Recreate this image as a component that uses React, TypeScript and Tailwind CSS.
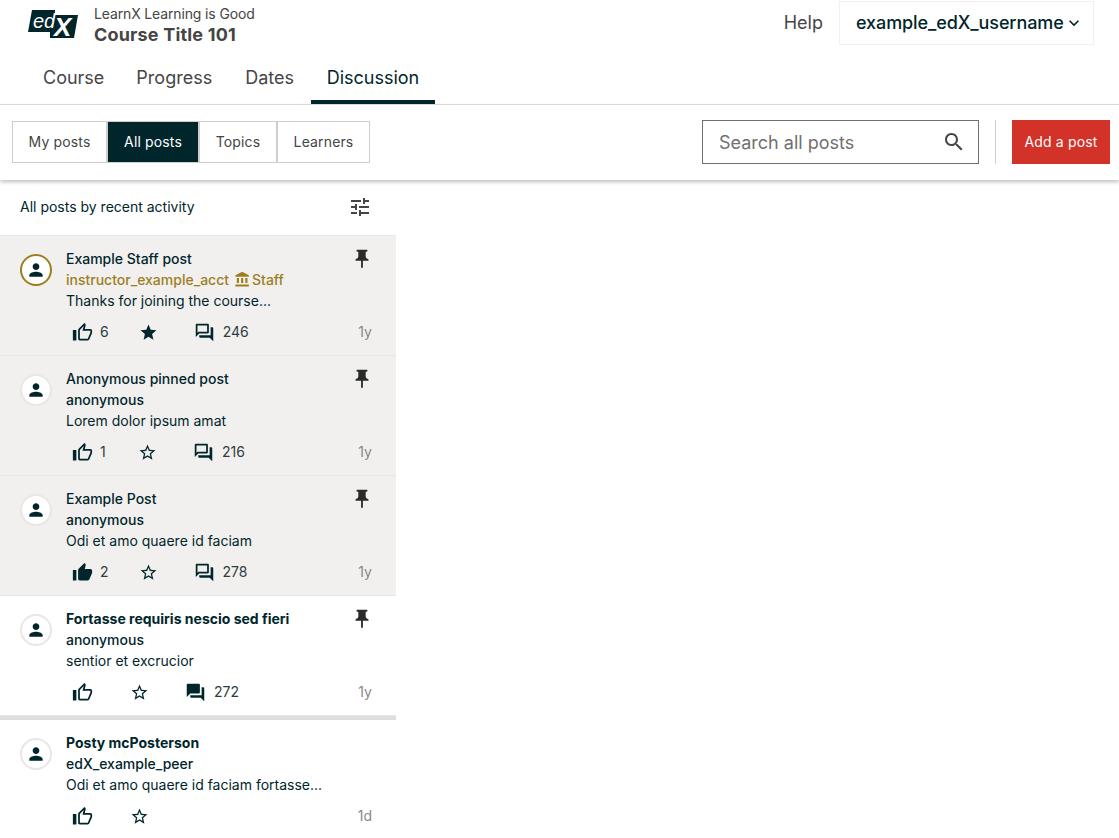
const font = "[font-family:Inter,'Noto_Sans',sans-serif]";

const paths = {
  thumb:
    "M9 21h9c.83 0 1.54-.5 1.84-1.22l3.02-7.05c.09-.23.14-.47.14-.73v-2c0-1.1-.9-2-2-2h-6.31l.95-4.57.03-.32c0-.41-.17-.79-.44-1.06L14.17 1 7.58 7.59C7.22 7.95 7 8.45 7 9v10c0 1.1.9 2 2 2zM9 9l4.34-4.34L12 10h9v2l-3 7H9V9zM1 9h4v12H1z",
  thumbFilled:
    "M1 21h4V9H1v12zm22-11c0-1.1-.9-2-2-2h-6.31l.95-4.57.03-.32c0-.41-.17-.79-.44-1.06L14.17 1 7.59 7.59C7.22 7.95 7 8.45 7 9v10c0 1.1.9 2 2 2h9c.83 0 1.54-.5 1.84-1.22l3.02-7.05c.09-.23.14-.47.14-.73v-2z",
  star: "M12 17.27L18.18 21l-1.64-7.03L22 9.24l-7.19-.61L12 2 9.19 8.63 2 9.24l5.46 4.73L5.82 21z",
  starBorder:
    "M22 9.24l-7.19-.62L12 2 9.19 8.63 2 9.24l5.46 4.73L5.82 21 12 17.27 18.18 21l-1.63-7.03L22 9.24zM12 15.4l-3.76 2.27 1-4.28-3.32-2.88 4.38-.38L12 6.1l1.71 4.04 4.38.38-3.32 2.88 1 4.28L12 15.4z",
  chat: "M15 4v7H5.17L4 12.17V4h11m1-2H3c-.55 0-1 .45-1 1v14l4-4h10c.55 0 1-.45 1-1V3c0-.55-.45-1-1-1zm5 4h-2v9H6v2c0 .55.45 1 1 1h11l4 4V7c0-.55-.45-1-1-1z",
  chatFilled:
    "M21 6h-2v9H6v2c0 .55.45 1 1 1h11l4 4V7c0-.55-.45-1-1-1zm-4 6V3c0-.55-.45-1-1-1H3c-.55 0-1 .45-1 1v14l4-4h10c.55 0 1-.45 1-1z",
  pin: "M16 9V4h1c.55 0 1-.45 1-1s-.45-1-1-1H7c-.55 0-1 .45-1 1s.45 1 1 1h1v5c0 1.66-1.34 3-3 3v2h5.97v7l1 1 1-1v-7H19v-2c-1.66 0-3-1.34-3-3z",
  person:
    "M12 12c2.21 0 4-1.79 4-4s-1.79-4-4-4-4 1.79-4 4 1.79 4 4 4zm0 2c-2.67 0-8 1.34-8 4v2h16v-2c0-2.66-5.33-4-8-4z",
  tune: "M3 17v2h6v-2H3zM3 5v2h10V5H3zm10 16v-2h8v-2h-8v-2h-2v6h2zM7 9v2H3v2h4v2h2V9H7zm14 4v-2H11v2h10zm-6-4h2V7h4V5h-4V3h-2v6z",
  search:
    "M15.5 14h-.79l-.28-.27C15.41 12.59 16 11.11 16 9.5 16 5.91 13.09 3 9.5 3S3 5.91 3 9.5 5.91 16 9.5 16c1.61 0 3.09-.59 4.23-1.57l.27.28v.79l5 4.99L20.49 19l-4.99-5zm-6 0C7.01 14 5 11.99 5 9.5S7.01 5 9.5 5 14 7.01 14 9.5 11.99 14 9.5 14z",
  staff:
    "M4 10v7h3v-7H4zm6 0v7h3v-7h-3zM2 22h19v-3H2v3zm14-12v7h3v-7h-3zm-4.5-9L2 6v2h19V6l-9.5-5z",
  chevron: "M16.59 8.59L12 13.17 7.41 8.59 6 10l6 6 6-6z",
};

function Icon({ d, className }: { d: string; className: string }) {
  return (
    <svg viewBox="0 0 24 24" fill="currentColor" className={className}>
      <path d={d} />
    </svg>
  );
}

function Logo() {
  return (
    <svg viewBox="0 0 50 34" className="h-[34px] w-[50px] shrink-0">
      <polygon points="4,0 27,0 27,5 50,5 46,28 22,28 22,22 0,22" fill="#00262b" />
      <text x="5" y="17.5" fontSize="20" fontStyle="italic" fill="#fff" fontFamily="Liberation Sans">
        ed
      </text>
      <text x="26" y="26" fontSize="26" fontStyle="italic" fontWeight="700" fill="#fff" fontFamily="Liberation Sans">
        X
      </text>
    </svg>
  );
}

type Post = {
  title: string;
  author: string;
  preview: string;
  time: string;
  likes?: number;
  liked?: boolean;
  starred?: boolean;
  replies?: number;
  unread?: boolean;
  pinned?: boolean;
  staff?: boolean;
  bold?: boolean;
  grey?: boolean;
};

const posts: Post[] = [
  { title: "Example Staff post", author: "instructor_example_acct", preview: "Thanks for joining the course...", time: "1y", likes: 6, starred: true, replies: 246, pinned: true, staff: true, grey: true },
  { title: "Anonymous pinned post", author: "anonymous", preview: "Lorem dolor ipsum amat", time: "1y", likes: 1, replies: 216, pinned: true, grey: true },
  { title: "Example Post", author: "anonymous", preview: "Odi et amo quaere id faciam", time: "1y", likes: 2, liked: true, replies: 278, pinned: true, grey: true },
  { title: "Fortasse requiris nescio sed fieri", author: "anonymous", preview: "sentior et excrucior", time: "1y", replies: 272, unread: true, pinned: true, bold: true },
  { title: "Posty mcPosterson", author: "edX_example_peer", preview: "Odi et amo quaere id faciam fortasse...", time: "1d", bold: true },
];

function PostRow({ post, last }: { post: Post; last: boolean }) {
  return (
    <div
      className={`flex h-[120px] shrink-0 gap-[14px] pl-5 pr-6 pt-3 border-b ${
        post.grey ? "bg-[#f2f0ef]" : "bg-white"
      } ${last ? "border-transparent" : "border-[#e9e6e4]"}`}
    >
      <div
        className={`mt-[6px] flex h-8 w-8 shrink-0 items-center justify-center rounded-full border-2 bg-white ${
          post.staff ? "border-[#9b7f1e]" : "border-[#e9e6e4]"
        }`}
      >
        <Icon d={paths.person} className="h-5 w-5 text-[#00262b]" />
      </div>
      <div className="min-w-0 flex-1">
        <div className="flex items-start justify-between">
          <div className="text-sm leading-[21px]">
            <div className={post.bold ? "font-bold text-[#00262b]" : "font-medium text-[#00262b]"}>{post.title}</div>
            {post.staff ? (
              <div className="flex items-center font-medium text-[#9b7f1e]">
                {post.author}
                <Icon d={paths.staff} className="ml-[5px] mr-[1px] h-[17px] w-[17px]" />
                Staff
              </div>
            ) : (
              <div className="font-medium text-[#00262b]">{post.author}</div>
            )}
            <div className="text-[#00262b]">{post.preview}</div>
          </div>
          <Icon d={paths.pin} className={post.pinned ? "-mr-px h-[22px] w-[22px] text-[#2a2a2a]" : "hidden"} />
        </div>
        <div className="mt-[9px] flex h-6 items-center pl-[6px] text-sm text-[#2f3c40]">
          <Icon d={post.liked ? paths.thumbFilled : paths.thumb} className="h-[21px] w-[21px] text-[#00262b]" />
          <span className={post.likes ? "ml-[7px] min-w-[8px]" : "ml-[7px]"}>{post.likes}</span>
          <Icon d={post.starred ? paths.star : paths.starBorder} className="ml-[30px] h-[19px] w-[19px] text-[#00262b]" />
          {post.replies !== undefined && (
            <>
              <Icon
                d={post.unread ? paths.chatFilled : paths.chat}
                className="ml-[36px] h-[21px] w-[21px] text-[#00262b]"
              />
              <span className="ml-[8px]">{post.replies}</span>
            </>
          )}
          <span className="ml-auto text-[#8a8886]">{post.time}</span>
        </div>
      </div>
    </div>
  );
}

const tabs = [
  { label: "My posts", width: "w-[95px]" },
  { label: "All posts", width: "w-[92px]" },
  { label: "Topics", width: "w-[78px]" },
  { label: "Learners", width: "w-[93px]" },
];

export default function App() {
  return (
    <div className={`${font} flex h-screen flex-col overflow-hidden bg-white text-[#454545]`}>
      <header className="shrink-0 border-b border-[#e0dedc]">
        <div className="flex h-[61px] items-start pl-[28px] pr-[25px]">
          <div className="mt-[10px]">
            <Logo />
          </div>
          <div className="ml-4 mt-[3px]">
            <div className="text-sm leading-[21px] tracking-[-0.01em]">LearnX Learning is Good</div>
            <div className="text-lg font-bold leading-[21px] tracking-[0.01em]">Course Title 101</div>
          </div>
          <div className="ml-auto mt-[1px] flex items-center">
            <span className="text-lg">Help</span>
            <button className="ml-4 flex h-[44px] w-[255px] items-center border border-[#f2f0ef] pl-4 text-lg font-medium tracking-[-0.005em] text-[#00262b]">
              example_edX_username
              <Icon d={paths.chevron} className="h-5 w-5" />
            </button>
          </div>
        </div>
        <nav className="flex h-[43px] pl-[27px] text-lg">
          <a className="px-4 pt-[3px]">Course</a>
          <a className="px-4 pt-[3px]">Progress</a>
          <a className="ml-px px-4 pt-[3px]">Dates</a>
          <a className="ml-px w-[124px] border-b-[4px] border-[#00262b] pt-[3px] text-center text-[#00262b]">Discussion</a>
        </nav>
      </header>

      <div className="z-10 flex h-[75px] shrink-0 items-start justify-between bg-white pl-3 pr-[9px] pt-[15px] shadow-[0_2px_4px_rgba(0,0,0,0.25)]">
        <div className="mt-px flex text-sm tracking-[0.01em]">
          {tabs.map((tab) => (
            <button
              key={tab.label}
              className={`h-[42px] border border-[#d0cecc] ${tab.width} ${
                tab.label === "All posts" ? "bg-[#00262b] text-white" : "bg-white text-[#454545]"
              }`}
            >
              {tab.label}
            </button>
          ))}
        </div>
        <div className="flex items-center">
          <div className="flex h-[44px] w-[277px] items-center border border-[#707070] pl-4 pr-[12px]">
            <span className="flex-1 pt-px text-lg text-[#707070]">Search all posts</span>
            <Icon d={paths.search} className="h-6 w-6 text-[#454545]" />
          </div>
          <div className="mx-4 h-[44px] w-px bg-[#d0cecc]" />
          <button className="h-[44px] w-[98px] bg-[#d23228] text-sm tracking-[0.01em] text-white">Add a post</button>
        </div>
      </div>

      <aside className="flex w-[396px] flex-col">
        <div className="flex h-[56px] shrink-0 items-center justify-between border-b border-[#e9e6e4] pb-[2px] pl-5 pr-[24px] text-sm text-[#00262b]">
          All posts by recent activity
          <Icon d={paths.tune} className="h-6 w-6 text-[#454545]" />
        </div>
        {posts.map((post, i) => (
          <div key={post.title} className="contents">
            <PostRow post={post} last={i === posts.length - 1} />
            {i === 3 && <div className="h-[4px] shrink-0 bg-[#e0dedc]" />}
          </div>
        ))}
      </aside>
    </div>
  );
}
